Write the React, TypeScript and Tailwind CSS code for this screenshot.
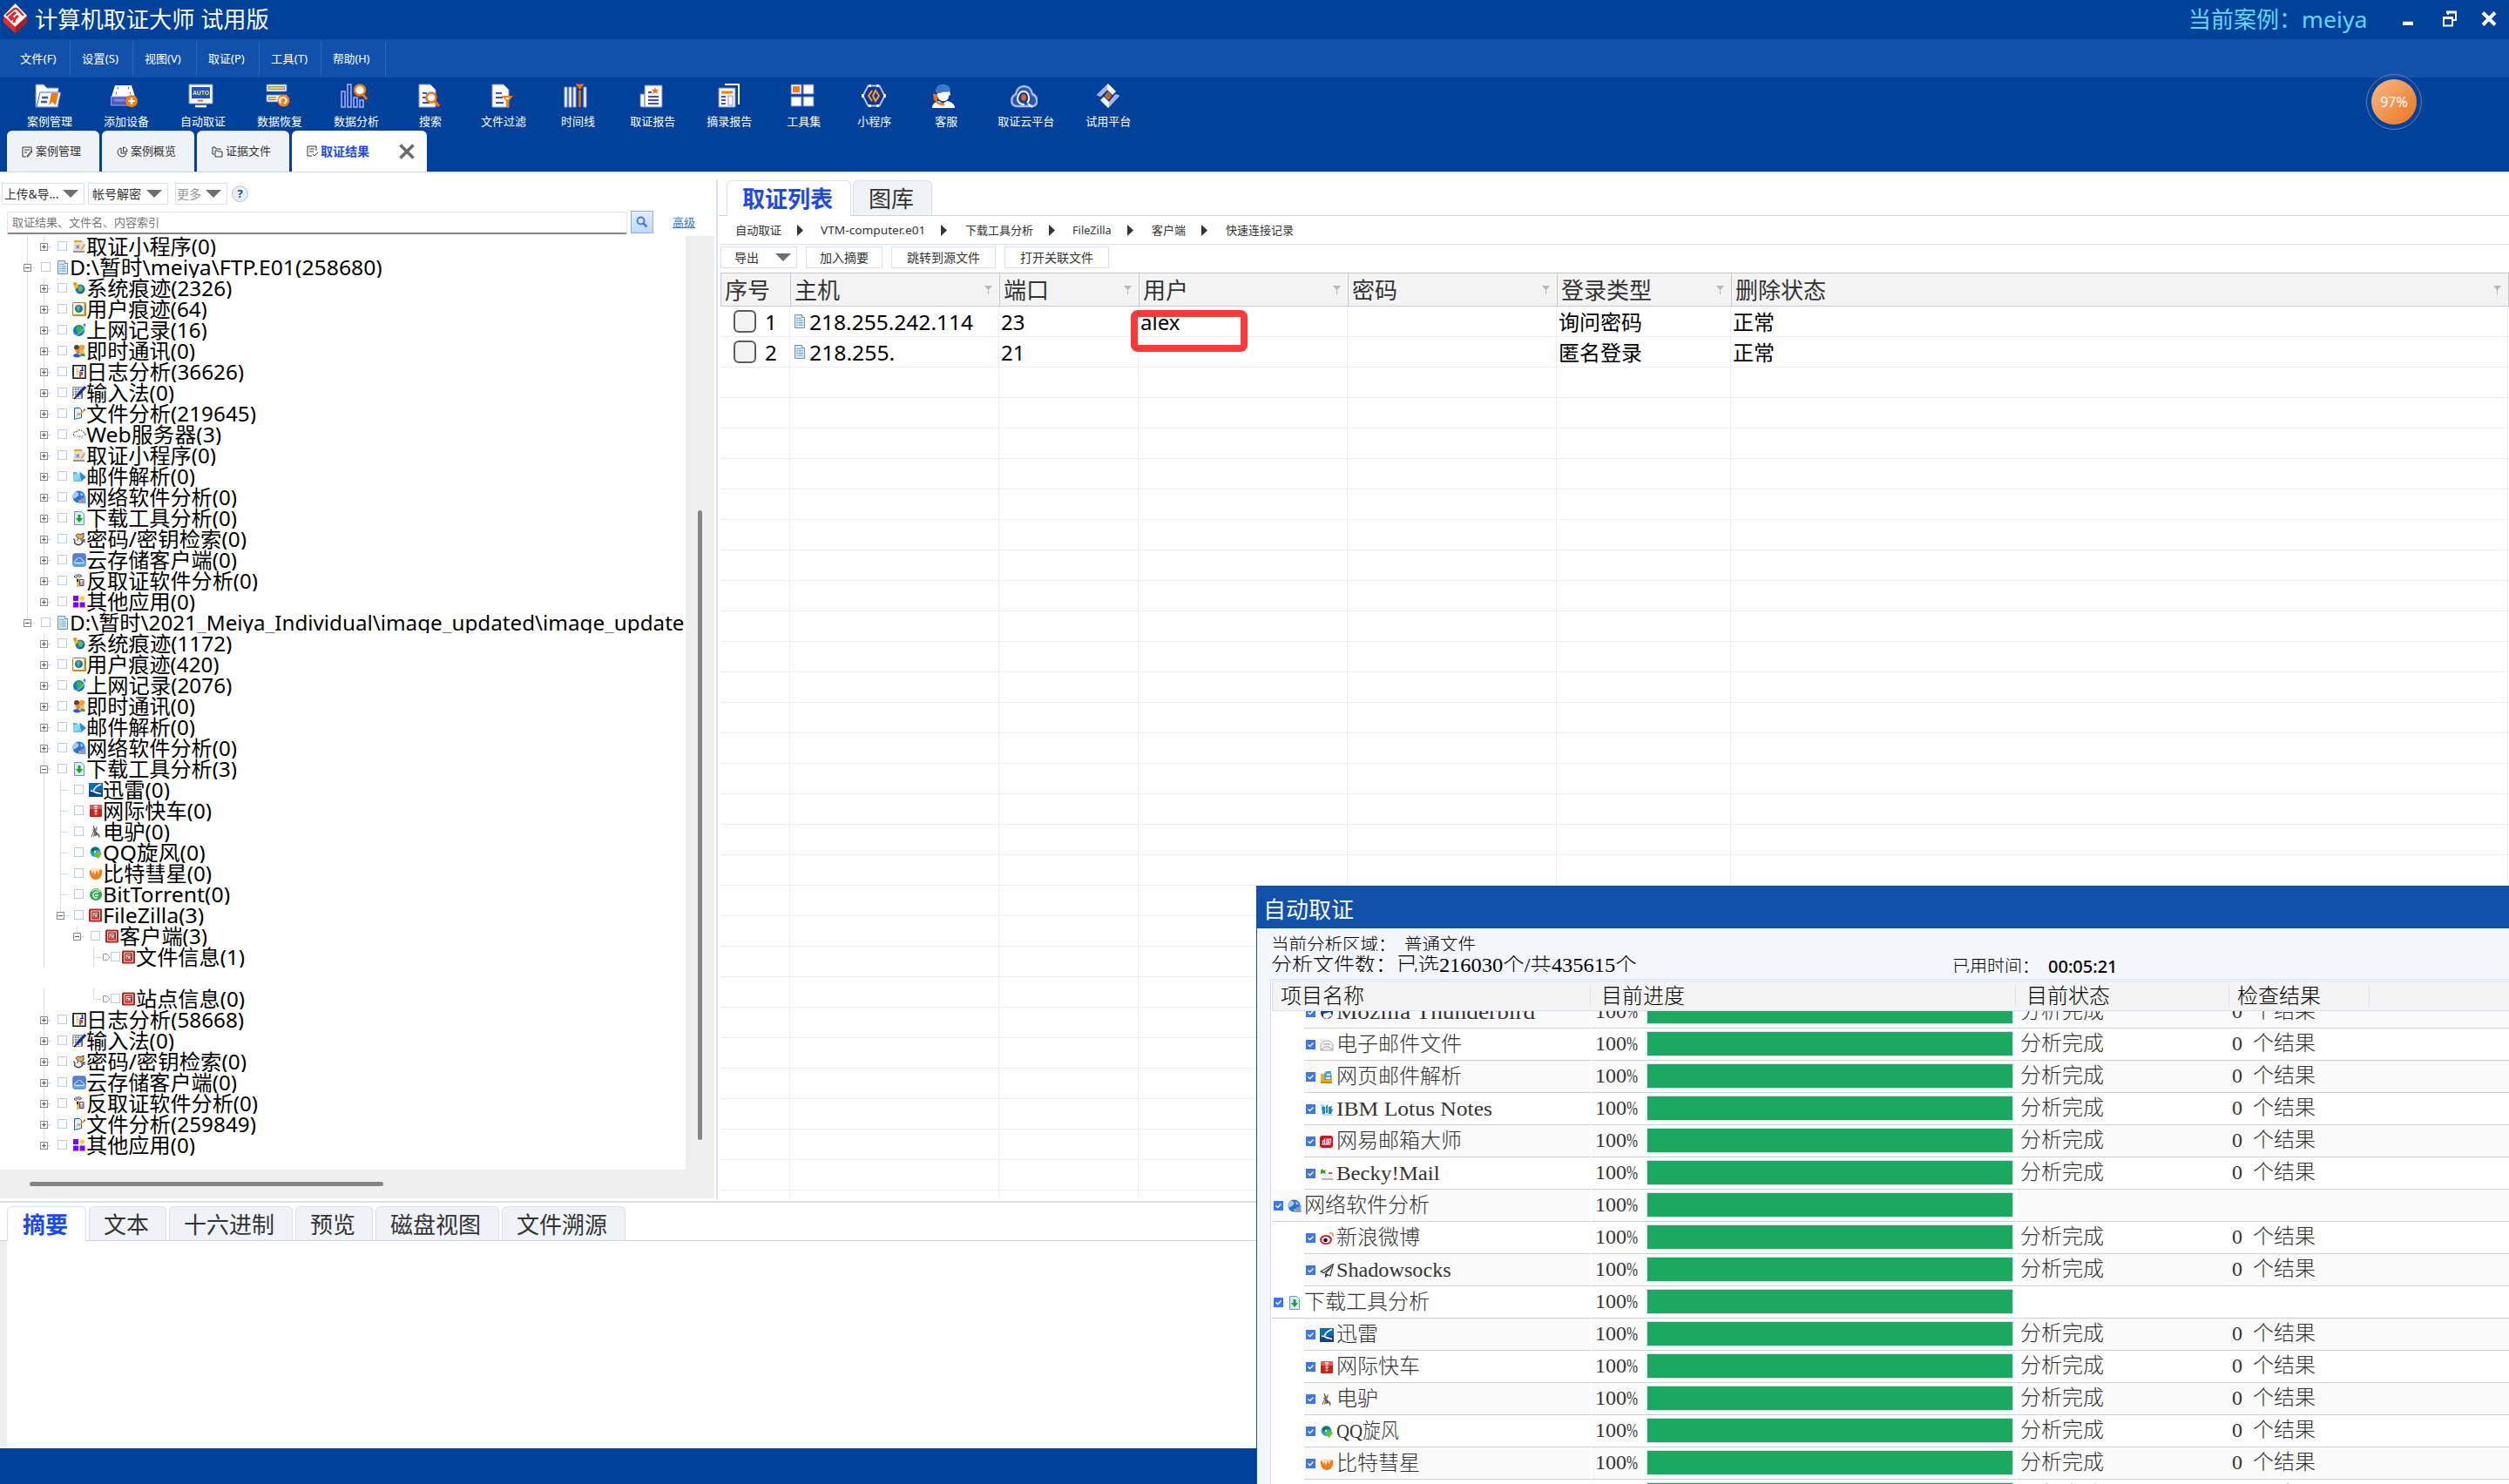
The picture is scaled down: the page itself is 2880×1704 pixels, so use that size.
import { useLayoutEffect, useRef, useState, type ReactNode } from "react";

/* Text squeezed or stretched horizontally to a fixed advance width. */
function Fit({ w, children }: { w: number; children: ReactNode }) {
  const ref = useRef<HTMLSpanElement>(null);
  const [k, setK] = useState(1);
  useLayoutEffect(() => {
    const el = ref.current;
    if (el && el.offsetWidth > 0) setK(w / el.offsetWidth);
  }, [w]);
  return (
    <span className="inline-block whitespace-nowrap" style={{ width: w }}>
      <span ref={ref} className="inline-block origin-left whitespace-pre" style={{ transform: `scaleX(${k})` }}>
        {children}
      </span>
    </span>
  );
}

/* ---------- 16px icons ---------- */
const ICONS: Record<string, ReactNode> = {
  mini: (
    <>
      <path d="M2 2h10l2 3v9H1z" fill="#e4e1dc" />
      <path d="M2 1h9v2H2z" fill="#e8a31c" />
      <path d="M3 6h6v5H3z" fill="#b9c4dd" />
      <path d="M5 9l2-3v4z" fill="#b5432f" />
      <path d="M1 13h13v2H1z" fill="#9a958d" />
      <path d="M14 5l-5 7 3-1 3-5z" fill="#e8964a" />
    </>
  ),
  doc: (
    <>
      <path d="M2.500 0.500h8l3 3v12h-11z" fill="#d3e8f5" stroke="#7893a5" />
      <path d="M10.500.5v3h3" fill="#fff" stroke="#7893a5" />
      <path d="M4.500 4.500h1M4.500 7h1M4.500 9.500h1M4.500 12h1" stroke="#3fa24a" />
      <path d="M6.500 4.500h3M6.500 7h5M6.500 9.500h5M6.500 12h5" stroke="#6d9fc4" />
    </>
  ),
  sys: (
    <>
      <circle cx="9" cy="9" r="5.500" fill="#1d6fd0" />
      <path d="M6 6c2-2 5-1 6 1s-1 5-3 6c-1-2-3-4-3-7z" fill="#5cc23a" />
      <path d="M1 1l4 0 2 5-3 3C2 7 1 4 1 1z" fill="#f2b632" />
      <path d="M2 2l2 1-1 2z" fill="#e0432a" />
      <path d="M8 13c3 0 5-2 5.500-4" stroke="#0b3d86" fill="none" />
    </>
  ),
  user: (
    <>
      <rect x="0.500" y="0.500" width="15" height="15" rx="1" fill="#fdf6cf" stroke="#a8821c" />
      <path d="M14.500 1v14H1" stroke="#b8912c" strokeWidth="2" fill="none" />
      <circle cx="7.500" cy="7.500" r="4.500" fill="#1a6fc4" />
      <path d="M5 6c2-3 4-2 4 0s-1 3-2 5c-1-2-2-3-2-5z" fill="#4ec153" />
    </>
  ),
  web: (
    <>
      <circle cx="7.500" cy="8.500" r="6.500" fill="#1673c5" />
      <path d="M5 4c3-2 7 0 7 3s-3 4-5 6c-2-2-3-6-2-9z" fill="#37b34a" />
      <path d="M1 12C4 16 12 11 15 2" stroke="#7fc4f2" fill="none" strokeWidth="1.200" />
      <circle cx="14" cy="2" r="1.500" fill="#2d8fd8" />
    </>
  ),
  im: (
    <>
      <circle cx="5" cy="4" r="3" fill="#5c4028" />
      <circle cx="11" cy="4" r="3.200" fill="#f0a038" />
      <path d="M3 6h6l1 5H5z" fill="#e8852c" />
      <path d="M8 7h5l1 4H9z" fill="#f5b95c" />
      <path d="M1 14c0-4 7-4 9 0-3 2-6 2-9 0z" fill="#3b4fe0" />
      <path d="M9 11h5l1 3h-5z" fill="#37a83a" />
    </>
  ),
  log: (
    <>
      <rect x="1" y="0.750" width="14" height="14.500" fill="#fffdf0" stroke="#111" strokeWidth="1.500" />
      <path d="M1 3v10" stroke="#111" strokeDasharray="1 1" strokeWidth="2" />
      <path d="M5.500 3v9M5.500 7h4" stroke="#d9c87c" strokeWidth="1.500" />
      <path d="M11.500 2v5M9 6.500h4" stroke="#1a1ae0" strokeWidth="1.600" />
      <path d="M8 9h3v2H9v3" stroke="#c0182c" fill="none" strokeWidth="1.500" />
    </>
  ),
  ime: (
    <>
      <path d="M0.500 1.500h11v13h-11z" fill="#e9e9e9" stroke="#999" />
      <path d="M1 4h10M1 7h10M1 10h10M4 2v12M7 2v12" stroke="#555" strokeDasharray="1 1" />
      <path d="M15 1L5 12" stroke="#0b2aa8" strokeWidth="3" />
      <path d="M5 12l-3 3" stroke="#111" strokeWidth="1.500" />
      <path d="M11 14V7" stroke="#222" />
    </>
  ),
  file: (
    <>
      <path d="M2.500 1.500h6l2 2v9l-8 2z" fill="#e4f3fc" stroke="#1d5c9c" />
      <path d="M4 12l2-6 3 3z" fill="#9ccdf0" />
      <path d="M14 4L8 9 6 8" stroke="#e8a62c" strokeWidth="1.800" fill="none" />
      <circle cx="14" cy="3.500" r="1" fill="#d02c2c" />
    </>
  ),
  srv: (
    <>
      <path d="M2 9c-2-3 1-5 3-4 1-3 6-3 7 0 3 0 4 3 2 5" stroke="#222" strokeDasharray="2 1.200" fill="none" />
      <path d="M5 8h6v3H5z" fill="#eee" />
      <path d="M2 10h12M8 10v4M11 11v3" stroke="#999" strokeDasharray="2 1" />
    </>
  ),
  mail: (
    <>
      <path d="M1 3h4l1 2h5v9H1z" fill="#4fbcdf" />
      <path d="M1 6l5-2 5 2v8H1z" fill="#8bd8f3" />
      <path d="M8 2l8 7-6 5-1-1V6z" fill="#2c8fd0" />
      <path d="M1 14l9-5v5z" fill="#6cc8ec" />
    </>
  ),
  net: (
    <>
      <circle cx="7.500" cy="7.500" r="7" fill="#2a6fd6" />
      <path d="M4 2c3 0 4 2 3 4S3 8 2 10C0 7 1 3 4 2zM9 2l4 3-3 2z" fill="#a8cdf5" />
      <rect x="7" y="11" width="3" height="4" fill="#5ad35e" />
      <rect x="10" y="9" width="3" height="6" fill="#e66ad2" />
      <rect x="13" y="7" width="2.500" height="8" fill="#44b8ea" />
    </>
  ),
  down: (
    <>
      <path d="M2.500.5h8l3 3v12h-11z" fill="#dceafc" stroke="#6f93c2" />
      <path d="M8 4v5" stroke="#1fa32c" strokeWidth="3" />
      <path d="M3.800 8h8.400L8 13z" fill="#1fa32c" />
    </>
  ),
  key: (
    <>
      <path d="M4 4c2-3 4-2 5-1l4-2v5l-2 2H7z" fill="#f2a848" stroke="#444" />
      <path d="M1.500 7.500c2 2 2 3 1 5 3 3 6 3 9 0 0-2 1-3 2-4" fill="#f2f2f2" stroke="#333" strokeWidth="1.200" />
      <circle cx="6" cy="9" r=".8" fill="#222" />
      <path d="M9 9h6M10 11h5" stroke="#444" />
    </>
  ),
  cloud: (
    <>
      <rect x="0.500" y="0.500" width="15" height="15" rx="2.500" fill="#4f7fe0" stroke="#8a98ad" />
      <path d="M1 10h14v4.500H1z" fill="#5cb0ee" />
      <path d="M4 11.500c-3-2 0-4 1-3.500 1-4 6-3 6 0 3 0 3 3 1 3.500z" fill="none" stroke="#fff" strokeWidth=".8" />
    </>
  ),
  anti: (
    <>
      <path d="M2 3c3-3 7-3 9-1L9 4 6 3 4 5z" fill="#aaa" stroke="#444" strokeDasharray="1.500 1" />
      <path d="M6.500 5v10" stroke="#e2b41c" strokeWidth="2.500" />
      <path d="M5 6h2v3H5z" fill="#222" />
      <path d="M8.500 6.500h4.500v7H8.500z" fill="#fff" stroke="#2c3f9c" />
      <path d="M10 13V9M12 13V8" stroke="#d0305c" />
    </>
  ),
  other: (
    <>
      <path d="M1 1h6v6H1zM1 8.500h6v6H1zM8.500 8.500h6v6h-6z" fill="#8400ff" />
      <path d="M11.500.500l3.500 3.500-3.500 3.500L8 4z" fill="#ffd21c" />
    </>
  ),
  xl: (
    <>
      <rect width="16" height="16" fill="#0f6ab8" />
      <path d="M0 9h16v7H0z" fill="#0a4684" />
      <path d="M14 1.500C9 3 6.500 5.500 5 9.500l5 2.500M2 9.500l2-.5M7 10.500l7 2" fill="none" stroke="#fff" strokeWidth="1.600" />
    </>
  ),
  fg: (
    <>
      <rect x="1" y="1" width="14" height="14" rx="1" fill="#c4231f" />
      <path d="M1 1h14v5H1z" fill="#dd605a" />
      <path d="M6 3h4M6.500 5.500h3" stroke="#fff" strokeWidth="1.300" />
      <path d="M5.500 7.500h5L8 10z" fill="#fff" />
      <path d="M5.500 10.500h5L8 13.500z" fill="#f7b02c" />
    </>
  ),
  mule: (
    <>
      <path d="M5 1l2 4 3-4-1 5-1 2 4 3 1 3-3-2-3 1-2 1 1-5z" fill="#7b7268" />
      <path d="M4 6l2 1-2 4-1 3M11 12l1 3M8 8l1 4M5 1l2 5" stroke="#3a3430" fill="none" strokeWidth=".8" />
    </>
  ),
  qq: (
    <>
      <circle cx="7.500" cy="7" r="6" fill="#2a9fd0" />
      <path d="M3 4c3-3 8-2 9 1-3-1-6 0-6 3-2 0-3-2-3-4z" fill="#1b6b4c" />
      <path d="M6 9l5-2 4 2-4 6-4-3z" fill="#62c528" />
      <circle cx="7" cy="7" r="1.300" fill="#e8f8ff" />
    </>
  ),
  bc: (
    <>
      <path d="M1 4c1 2 2-2 3 0s2-3 3-1 2-2 3 0 2-2 5 1c1 6-2 11-7 11S0 10 1 4z" fill="#f07a1a" />
      <path d="M2 3l2 6 1-4 2 5 2-6 2 5 1-4 2-2-2-1H3z" fill="#ffe2bd" />
    </>
  ),
  bt: (
    <>
      <circle cx="8" cy="8" r="7" fill="#2aa84a" />
      <path d="M3 5c3-4 8-3 10 0" stroke="#b8f0bf" strokeWidth="1.500" fill="none" />
      <path d="M11 6c-3-2-6 0-6 3s3 4 5 2M7 9h4" stroke="#fff" strokeWidth="1.500" fill="none" />
    </>
  ),
  fz: (
    <>
      <rect x="0" y="0.500" width="15" height="15" rx="1.500" fill="#b8221a" />
      <rect x="2.700" y="3" width="9.800" height="10" fill="none" stroke="#fff" strokeWidth=".9" />
      <path d="M4.500 5.500h6M5 5.500v5M6 7.500h4l-3.500 3.500M7 8l3.500 3" stroke="#fff" strokeWidth=".9" fill="none" />
    </>
  ),
  tb: (
    <>
      <circle cx="8" cy="8" r="7" fill="#1d3f6e" />
      <path d="M4 9l8-2 2 4-6 4-4-2z" fill="#eef3f8" />
    </>
  ),
  env: (
    <>
      <path d="M1 7l4-4h6l4 4v7H1z" fill="#f2f2f2" stroke="#aaa" />
      <path d="M1 14l5-4h4l5 4M4 7h8" stroke="#999" fill="none" />
    </>
  ),
  webmail: (
    <>
      <path d="M1 4h4l1 1h8v10H1z" fill="#e9b318" />
      <path d="M1 13h13v2H1z" fill="#c28a08" />
      <path d="M7 1h6v10H5V4z" fill="#4ba3e2" />
      <path d="M8 4h4v2H8zM7 8h5v2H7z" fill="#e8f5ff" />
    </>
  ),
  lotus: (
    <>
      <path d="M0 1l3 2 3-1-1 3H2z" fill="#8cc8ea" />
      <path d="M2 5h4v8H3zM7 4l2-2v10H7zM10 5l4-1-1 3 2 1-2 5h-3z" fill="#1987cf" />
      <path d="M3 14h12" stroke="#7bb8dc" />
    </>
  ),
  netease: (
    <>
      <rect x="0" y="1" width="15" height="14" rx="3" fill="#d0131f" />
      <path d="M2.500 11h10M3.500 10.500V7h2v3.500M5.500 4v6M8 11V5h2v6M10 5h2.500v4H10" stroke="#fff" strokeWidth="1.200" fill="none" />
    </>
  ),
  becky: (
    <>
      <path d="M5 7h10v7H2z" fill="#f0f0f0" />
      <path d="M2 14h13" stroke="#777" />
      <path d="M1 4l2-2 1 2 3-1-1 3 1 2-3-1-3 1z" fill="#3f9c2c" />
      <path d="M10 6h4v2h-4z" fill="#c4508c" />
    </>
  ),
  weibo: (
    <>
      <ellipse cx="7" cy="9.500" rx="7" ry="5.500" fill="#d02330" />
      <ellipse cx="7" cy="9.700" rx="4.800" ry="3.600" fill="#fff" />
      <circle cx="6.500" cy="10" r="2.300" fill="#111" />
      <path d="M11 2c3-1 5 1 4 4" stroke="#f0941c" strokeWidth="1.500" fill="none" />
    </>
  ),
  ss: (
    <path d="M15.500 0.500L1 9l3.500 1.500L14 3 6.500 11.500 12 14zM6.500 11.500V15l2.500-2.500" fill="#fff" stroke="#333" strokeWidth="1.100" />
  ),
};

function Ico({ n }: { n: string }) {
  return (
    <svg viewBox="0 0 16 16" className="h-4 w-4 shrink-0">
      {ICONS[n]}
    </svg>
  );
}

/* ---------- header ---------- */
const MENUS: [string, string][] = [
  ["文件(F)", "w-[81px] pl-[23px]"],
  ["设置(S)", "w-[72px] pl-[13px]"],
  ["视图(V)", "w-[73px] pl-[13px]"],
  ["取证(P)", "w-[72px] pl-[13px]"],
  ["工具(T)", "w-[71px] pl-[13px]"],
  ["帮助(H)", "w-[74px] pl-[13px]"],
];

const page = "M3 1h13l6 6v20H3z";
const TOOLS: [string, string, string, ReactNode][] = [
  ["案例管理", "ml-[31px]", "-translate-x-[2px]", (
    <>
      <path d="M1 1h9l4 4h13v22H1z" fill="#fff" stroke="#6d7fd0" />
      <path d="M6 10h24l-4 17H2z" fill="#fff" stroke="#4a66c4" />
      <path d="M8 16h7M7 21h7" stroke="#3a50d0" strokeWidth="2.500" />
      <path d="M19 11h8l-3 14-4-4-4 4z" fill="#f97a0a" />
    </>
  )],
  ["添加设备", "ml-[36px]", "-translate-x-[3px]", (
    <>
      <path d="M5 2h19l4 13H1z" fill="#fff" />
      <path d="M8 5h1M20 5h1M6 11h1M22 11h1" stroke="#4d5fc0" strokeWidth="2.500" />
      <path d="M.5 15h25v10H.5z" fill="#4c5cc4" stroke="#9aa5e0" />
      <path d="M4 19h12" stroke="#7d8be0" strokeWidth="3" />
      <circle cx="24" cy="20" r="7" fill="#fb7c08" />
      <path d="M24 16v8M20 20h8" stroke="#fff" strokeWidth="2.200" />
    </>
  )],
  ["自动取证", "ml-[36px]", "-translate-x-[3px]", (
    <>
      <path d="M2 1h27v22H2z" fill="#fff" stroke="#7a8ad8" />
      <path d="M5 4h21v13H5z" fill="#174fd8" />
      <text x="6" y="13" fontSize="8" fontFamily="Liberation Sans" fontWeight="bold" fill="#f0ee3c" textLength="19" lengthAdjust="spacingAndGlyphs">AUTO</text>
      <path d="M12 19.500h6" stroke="#f5640a" strokeWidth="2" />
      <path d="M9 26h13" stroke="#fff" strokeWidth="2.500" />
    </>
  )],
  ["数据恢复", "ml-[36px]", "-translate-x-[2px]", (
    <>
      <path d="M2 1h23v8H2zM2 13h23v8H2z" fill="#fff" stroke="#6d7fd0" />
      <path d="M4 5h19M4 17h9" stroke="#7d86b4" strokeWidth="4" />
      <path d="M5 5h17M5 17h8" stroke="#f0e01c" strokeWidth="2" />
      <circle cx="21.500" cy="19.500" r="7" fill="#fb7c08" />
      <path d="M18 23c-2-5 1-8 4-7s4 5 0 7M16 18l2 0" stroke="#fff" strokeWidth="2" fill="none" />
    </>
  )],
  ["数据分析", "ml-[36px]", "-translate-x-[3px]", (
    <>
      <path d="M1 9h4v18H1zM8 1h4v26H8zM15 16h4v11h-4zM22 19h4v8h-4z" fill="#0c3ca4" stroke="#a9b3f2" strokeWidth="1.500" />
      <path d="M25 12l5 6" stroke="#f5740a" strokeWidth="3" />
      <circle cx="22" cy="7.500" r="6" fill="#fff" stroke="#f5740a" strokeWidth="2.500" />
    </>
  )],
  ["搜索", "ml-[46px]", "-translate-x-[1px]", (
    <>
      <path d={page} fill="#fff" stroke="#8898e0" />
      <path d="M7 11h5M7 16h5M7 22h8" stroke="#3a50d0" strokeWidth="2" />
      <path d="M21 20l5 6" stroke="#f5740a" strokeWidth="3" />
      <circle cx="17" cy="16" r="5.500" fill="#fff" stroke="#f5740a" strokeWidth="2.500" />
    </>
  )],
  ["文件过滤", "ml-[45px]", "-translate-x-[1px]", (
    <>
      <path d={page} fill="#fff" stroke="#8898e0" />
      <path d="M7 11h7M7 16h8M7 22h9" stroke="#3a50d0" strokeWidth="2" />
      <path d="M14 14h13l-5 6v8l-3-2v-6z" fill="#fb7c08" />
      <path d="M18 16h5l-2.500 3z" fill="#fff" />
    </>
  )],
  ["时间线", "ml-[40px]", "-translate-x-[3px]", (
    <>
      <path d="M3 4h3v23H3zM8 4h3v23H8zM13 4h3v23h-3zM25 4h3v23h-3z" fill="#fff" stroke="#8d9ae2" />
      <path d="M20.500 8v19" stroke="#fb6c08" strokeWidth="2.500" />
      <path d="M15.500 0.500h10l-5 6.500z" fill="#fb6c08" />
    </>
  )],
  ["取证报告", "ml-[40px]", "-translate-x-[2px]", (
    <>
      <path d="M3 12h5v15H5c-2 0-2-1-2-3z" fill="#fff" stroke="#6d7fd0" />
      <path d="M8 2h20v25H8z" fill="#fff" stroke="#6d7fd0" />
      <path d="M12 10h4M12 15h12M12 19h12M12 23h12" stroke="#3a50d0" strokeWidth="2" />
      <path d="M20 4l1 3h3l-2 2 1 3-3-2-3 2 1-3-2-2h3z" fill="#fb6c08" />
    </>
  )],
  ["摘录报告", "ml-[36px]", "", (
    <>
      <path d="M10 1h16v23" fill="none" stroke="#fff" strokeWidth="2" />
      <path d="M3 5h19v22H3z" fill="#fff" stroke="#6d7fd0" />
      <path d="M6 10h13" stroke="#fb7c08" strokeWidth="3" />
      <path d="M6 15h5M6 19h5M6 23h5" stroke="#3a50d0" strokeWidth="2" />
      <path d="M14 14h5v11h-5z" fill="#fff" stroke="#7a8ad8" />
    </>
  )],
  ["工具集", "ml-[40px]", "-translate-x-[1px]", (
    <>
      <path d="M2 1h12v11H2zM16 1h12v11H16zM2 15h12v11H2zM16 15h12v11H16z" fill="#fff" stroke="#5a72cc" />
      <path d="M4 3h8v7H4z" fill="#fb7c08" />
    </>
  )],
  ["小程序", "ml-[42px]", "", (
    <>
      <path d="M8.500 2.500h13l6 11.500-6 11.500h-13L2.500 14z" fill="#1b2f9c" stroke="#9ec8f0" strokeWidth="2" />
      <path d="M9 1h3v3H9zM18 1h3v3h-3zM9 24h3v3H9zM18 24h3v3h-3zM1 12h3v4H1zM26 12h3v4h-3z" fill="#fff" />
      <path d="M13 8l-4 6 4 6M17 8l-3 6 3 6 4-6z" stroke="#eea71c" strokeWidth="2" fill="none" />
    </>
  )],
  ["客服", "ml-[50px]", "-translate-x-[3px]", (
    <>
      <path d="M8 8h14l1 5-2 1c0 4-2 6-7 6-4 0-6-4-6-7z" fill="#fff" />
      <path d="M6 9c-1-11 18-11 17 0-5 1-9 0-12 2H7z" fill="#3b78cc" />
      <path d="M3 12h5v7H4z" fill="#fb6c08" />
      <path d="M2 28c0-5 4-7 8-8l4 3 5-3c6 1 9 4 9 8z" fill="#fff" />
      <path d="M6 19c2 4 6 5 10 5" stroke="#fb6c08" strokeWidth="2.500" fill="none" />
    </>
  )],
  ["取证云平台", "ml-[46px]", "-translate-x-[2px]", (
    <>
      <path d="M7 26C-1 25 0 15 6 12c2-12 17-12 19 0 7 3 7 13 0 14H7z" fill="#2a55b4" stroke="#a9bbe8" strokeWidth="2.500" />
      <path d="M20 23l5 4M19 22c4-4 2-13-4-13S6 18 10 22c2 2 4 2 6 2" fill="#0c3ca4" stroke="#fff" strokeWidth="2" />
      <ellipse cx="15" cy="16" rx="2.800" ry="3.800" fill="#f0620a" />
    </>
  )],
  ["试用平台", "ml-[36px]", "", (
    <>
      <path d="M15 0l9 9-4 4-6-6L6 15l-4-2z" fill="#fff" />
      <path d="M14 1L2 13l4 2 8-8z" fill="#a9b3ea" />
      <path d="M15 28l-9-9 4-4 6 6 8-9 4 2z" fill="#fff" />
      <path d="M16 27l12-13-4-2-8 9z" fill="#a9b3ea" />
      <path d="M15 9l4 5-4 5-4-5z" fill="#f07a1c" />
      <path d="M15 9v10M11 14h8" stroke="#b0440a" />
    </>
  )],
];

function Header() {
  return (
    <header className="h-[197px] shrink-0 bg-[#00419c] text-white">
      <div className="flex h-[45px] items-center">
        <svg viewBox="0 0 27 34" className="ml-[4px] mt-[-3px] h-[34px] w-[27px]">
          <path d="M13.500 0L27 15v7L13.500 34 0 22v-7z" fill="#e02a2c" />
          <path d="M13.500 0L27 14 13.500 27 0 14z" fill="#fff" />
          <path d="M3 14L12 6.500c2-1.500 4 0 5 1l6 6.500" stroke="#e02a2c" strokeWidth="2.500" fill="none" />
          <path d="M6 17l8-7M12 22c0-4 2-6 5-8M8 19l4-3" stroke="#e02a2c" strokeWidth="3" fill="none" />
          <path d="M13.500 27L27 15v7L13.500 34z" fill="#b01c22" />
        </svg>
        <span className="ml-[9px] text-[26px] leading-[45px]"><Fit w={269}>计算机取证大师 试用版</Fit></span>
        <div className="ml-auto flex items-center">
          <span className="text-[26px] leading-[45px] text-[#5fd8fb]">当前案例：</span>
          <span className="text-[26px] leading-[45px] text-[#5fd8fb]"><Fit w={76}>meiya</Fit></span>
          <svg viewBox="0 0 110 20" className="ml-[38px] mr-[14px] mt-[-4px] h-[20px] w-[110px]">
            <path d="M2 13.800h12v4.200H2z" fill="#fff" />
            <path d="M54 6V3h9v9h-3M49 9h10v9.500H49z" fill="none" stroke="#fff" strokeWidth="2" />
            <path d="M48 8h12v3H48zM52 1.500h12v3H52z" fill="#fff" />
            <path d="M94 3.500l14 14M108 3.500l-14 14" stroke="#fff" strokeWidth="4" />
          </svg>
        </div>
      </div>
      <nav className="flex h-[44px] bg-[#1151ac] py-[2px] text-[13px] leading-[40px]">
        {MENUS.map(([t, c]) => (
          <span key={t} className={`${c} border-r border-[#2c66b8]`}>
            <Fit w={42}>{t}</Fit>
          </span>
        ))}
      </nav>
      <div className="flex h-[61px] pt-[7px]">
        {TOOLS.map(([t, ml, shift, svg]) => (
          <div key={t} className={`${ml} flex flex-col items-center whitespace-nowrap text-[13px] leading-[20px]`}>
            <svg viewBox="0 0 31 29" className={`${shift} -mx-[4px] h-[29px] w-[31px]`}>{svg}</svg>
            <span className="mt-[4px]">{t}</span>
          </div>
        ))}
      </div>
      <div className="flex h-[47px] items-end gap-[3px] pl-[8px] text-[13px] text-[#333]">
        <span className="flex h-[47px] w-[106px] items-center gap-[3px] rounded-t-[6px] border-t border-[#d6e0f2] bg-[#eff3f8] pl-[17px]">
          <svg viewBox="0 0 13 13" className="h-[13px] w-[13px]"><path d="M11 5V1H1v11h4M3 4h6M3 7h3M12 6l-5 6-1 0 1-2 4-5z" stroke="#333" fill="none" /></svg>
          案例管理
        </span>
        <span className="flex h-[47px] w-[106px] items-center gap-[3px] rounded-t-[6px] border-t border-[#d6e0f2] bg-[#eff3f8] pl-[17px]">
          <svg viewBox="0 0 13 13" className="h-[13px] w-[13px]"><path d="M5 2a5 5 0 106 6H5zM7.500 1a5 5 0 014.500 5l-4.500 0z" stroke="#333" fill="none" /></svg>
          案例概览
        </span>
        <span className="flex h-[47px] w-[106px] items-center gap-[3px] rounded-t-[6px] border-t border-[#d6e0f2] bg-[#eff3f8] pl-[17px]">
          <svg viewBox="0 0 13 13" className="h-[13px] w-[13px]"><path d="M10 4V3H5L4 1H1v8h2M4 5h3l1 1h4v6H4z" stroke="#333" fill="none" /></svg>
          证据文件
        </span>
        <span className="flex h-[47px] w-[155px] items-center gap-[3px] rounded-t-[6px] bg-white pl-[17px] text-[14px] font-semibold text-[#1b49ee]">
          <svg viewBox="0 0 13 13" className="h-[13px] w-[13px]"><path d="M11 6V1H1v11h5M3 4h6M3 7h5M7 10l2 2 4-4" stroke="#333" fill="none" /></svg>
          取证结果
          <svg viewBox="0 0 18 18" className="ml-[31px] h-[18px] w-[18px]"><path d="M1.500 1.500l15 15M16.500 1.500l-15 15" stroke="#6b6b6b" strokeWidth="3.500" /></svg>
        </span>
      </div>
    </header>
  );
}

/* ---------- evidence tree ---------- */
type Row = { g: string; t?: string; b?: "+" | "-" | "" | ">"; i?: string; half?: boolean; w?: number };
const r = (g: string, b: Row["b"], i: string, t: string, half = false, w?: number): Row => ({ g, b, i, t, half, w });
const ROWS: Row[] = [
  r("|", "+", "mini", "取证小程序(0)", true),
  r("", "-", "doc", "D:\\暂时\\meiya\\FTP.E01(258680)", false, 359),
  r("|", "+", "sys", "系统痕迹(2326)"),
  r("|", "+", "user", "用户痕迹(64)"),
  r("|", "+", "web", "上网记录(16)"),
  r("|", "+", "im", "即时通讯(0)"),
  r("|", "+", "log", "日志分析(36626)"),
  r("|", "+", "ime", "输入法(0)"),
  r("|", "+", "file", "文件分析(219645)"),
  r("|", "+", "srv", "Web服务器(3)", false, 155),
  r("|", "+", "mini", "取证小程序(0)"),
  r("|", "+", "mail", "邮件解析(0)"),
  r("|", "+", "net", "网络软件分析(0)"),
  r("|", "+", "down", "下载工具分析(0)"),
  r("|", "+", "key", "密码/密钥检索(0)", false, 184),
  r("|", "+", "cloud", "云存储客户端(0)"),
  r("|", "+", "anti", "反取证软件分析(0)"),
  r("|", "+", "other", "其他应用(0)", true),
  r("", "-", "doc", "D:\\暂时\\2021_Meiya_Individual\\image_updated\\image_update", true, 706),
  r(" ", "+", "sys", "系统痕迹(1172)"),
  r(" ", "+", "user", "用户痕迹(420)"),
  r(" ", "+", "web", "上网记录(2076)"),
  r(" ", "+", "im", "即时通讯(0)"),
  r(" ", "+", "mail", "邮件解析(0)"),
  r(" ", "+", "net", "网络软件分析(0)"),
  r(" ", "-", "down", "下载工具分析(3)"),
  r(" |", "", "xl", "迅雷(0)"),
  r(" |", "", "fg", "网际快车(0)"),
  r(" |", "", "mule", "电驴(0)"),
  r(" |", "", "qq", "QQ旋风(0)", false, 118),
  r(" |", "", "bc", "比特彗星(0)"),
  r(" |", "", "bt", "BitTorrent(0)", false, 146),
  r(" |", "-", "fz", "FileZilla(3)", true, 116),
  r(" | ", "-", "fz", "客户端(3)", true),
  r(" |  ", ">", "fz", "文件信息(1)"),
  { g: "" },
  r(" |  ", ">", "fz", "站点信息(0)", true),
  r(" ", "+", "log", "日志分析(58668)"),
  r(" ", "+", "ime", "输入法(0)"),
  r(" ", "+", "key", "密码/密钥检索(0)", false, 184),
  r(" ", "+", "cloud", "云存储客户端(0)"),
  r(" ", "+", "anti", "反取证软件分析(0)"),
  r(" ", "+", "file", "文件分析(259849)"),
  r(" ", "+", "other", "其他应用(0)", true),
];

/* Advance width of a label made of full-width characters, digits and brackets. */
function labelWidth(t: string) {
  let w = 0;
  for (const c of t) {
    if (c > "\u2e80") w += 24;
    else if (c >= "0" && c <= "9") w += 14.06;
    else if (c === "(" || c === ")") w += 7.4;
    else return undefined;
  }
  return w;
}

function TreeRow({ row }: { row: Row }) {
  if (!row.t) return <div className="h-[24px]" />;
  const w = row.w ?? labelWidth(row.t);
  /* The outer guides follow the toggle column of each ancestor level. */
  const cells = row.g.split("");
  return (
    <div className="flex h-[24px] overflow-hidden pl-[22px]">
      {cells.map((c, i) => (
        <span key={i} className="flex w-[19px] shrink-0 justify-center">
          {c === "|" && <span className="w-px bg-[#dcdcdc]" />}
        </span>
      ))}
      <svg viewBox="0 0 19 24" className="h-[24px] w-[19px] shrink-0">
        <path d={row.half ? "M9.500 0v12.500" : "M9.500 0v24"} stroke="#dcdcdc" />
        <path d="M9.500 12.500h8.500" stroke="#dcdcdc" />
        {(row.b === "+" || row.b === "-") && (
          <>
            <rect x="5.500" y="8.500" width="8" height="8" fill="#fff" stroke="#8a8a8a" />
            <path d={row.b === "+" ? "M7 12.500h5M9.500 10v5" : "M7 12.500h5"} stroke="#33529c" />
          </>
        )}
      </svg>
      {row.b === ">" ? (
        <>
          <svg viewBox="0 0 10 24" className="h-[24px] w-[10px] shrink-0"><path d="M1.500 8.500h4.500l3 3.500-3 3.500H1.500z" fill="#fff" stroke="#9a9a9a" /></svg>
          <span className="mr-[2px] mt-[6px] h-[11px] w-[11px] shrink-0 border border-[#b5cdf8]" />
        </>
      ) : (
        <span className="mx-[6px] mt-[6px] h-[11px] w-[11px] shrink-0 border border-[#b5cdf8] bg-white" />
      )}
      <span className="mt-[4px] h-4"><Ico n={row.i!} /></span>
      <span className="whitespace-nowrap text-[24px] leading-[24px] text-black">
        {w ? <Fit w={w}>{row.t}</Fit> : row.t}
      </span>
    </div>
  );
}

function Caret() {
  return <svg viewBox="0 0 18 9" className="h-[9px] w-[18px] shrink-0"><path d="M0 0h18L9 9z" fill="#6e6e6e" /></svg>;
}

function LeftPanel() {
  return (
    <section className="flex w-[820px] shrink-0 flex-col">
      <div className="mt-[12px] flex h-[25px] text-[14px] leading-[23px] text-[#333]">
        <div className="ml-[2px] flex w-[95px] items-center justify-between border border-[#d6e0f2] pl-[2px] pr-[6px]"><Fit w={63}>上传&amp;导...</Fit><Caret /></div>
        <div className="ml-[4px] flex w-[92px] items-center justify-between border border-[#d6e0f2] pl-[4px] pr-[6px]"><span>帐号解密</span><Caret /></div>
        <div className="ml-[8px] flex w-[60px] items-center justify-between border border-[#d6e0f2] pl-[1px] pr-[6px] text-[#999]"><span>更多</span><Caret /></div>
        <div className="ml-[5px] mt-[3px] h-[19px] w-[19px] rounded-full border border-[#b4c8de] bg-[#e6eef6] text-center text-[13px] font-bold leading-[17px] text-[#1c4c8c]">?</div>
      </div>
      <div className="mt-[7px] flex h-[29px] items-start">
        <div className="ml-[8px] mt-[1px] h-[26px] w-[712px] rounded-[2px] border border-b-2 border-[#e6e6e6] border-b-[#868686] pl-[5px] text-[13px] leading-[23px] text-[#767676]">取证结果、文件名、内容索引</div>
        <div className="ml-[4px] flex h-[26px] w-[26px] items-center justify-center border border-[#93b1dc] bg-gradient-to-b from-[#e2edfb] to-[#bfd9fb]">
          <svg viewBox="0 0 14 14" className="h-[14px] w-[14px]"><circle cx="5.500" cy="5.500" r="4" fill="none" stroke="#4d7cc0" strokeWidth="2" /><path d="M8.500 8.500l4 4" stroke="#4d7cc0" strokeWidth="2.500" /></svg>
        </div>
        <a className="ml-[22px] mt-[2px] text-[13px] leading-[22px] text-[#3d74d6] underline">高级</a>
      </div>
      <div className="flex h-[1072px]">
        <div className="w-[787px] overflow-hidden">
          {ROWS.map((row, i) => <TreeRow key={i} row={row} />)}
        </div>
        <div className="w-[33px] bg-[#efefef] pl-[14px] pt-[315px]">
          <div className="h-[723px] w-[5px] rounded-full bg-[#858585]" />
        </div>
      </div>
      <div className="h-[33px] bg-[#efefef] pl-[34px] pt-[14px]">
        <div className="h-[5px] w-[406px] rounded-full bg-[#858585]" />
      </div>
    </section>
  );
}

/* ---------- results table ---------- */
const CRUMBS: [string, string, number][] = [
  ["自动取证", "", 53],
  ["VTM-computer.e01", "ml-[20px]", 120],
  ["下载工具分析", "ml-[21px]", 78],
  ["FileZilla", "ml-[20px]", 45],
  ["客户端", "ml-[21px]", 39],
  ["快速连接记录", "ml-[21px]", 78],
];
const COLS: [string, string, boolean][] = [
  ["序号", "w-[80px]", false],
  ["主机", "w-[240px]", true],
  ["端口", "w-[160px]", true],
  ["用户", "w-[240px]", true],
  ["密码", "w-[240px]", true],
  ["登录类型", "w-[200px]", true],
  ["删除状态", "w-[892px]", true],
];
const DATA = [
  ["1", "218.255.242.114", "23", "alex", "", "询问密码", "正常"],
  ["2", "218.255.", "21", "", "", "匿名登录", "正常"],
];
const HOST_WIDTH = [188, 98];

function RightPanel() {
  return (
    <section className="flex flex-1 flex-col overflow-hidden">
      <div className="flex h-[50px] items-end border-b border-[#cfcfdd] pl-[9px] text-[26px] leading-[40px]">
        <span className="-mb-px h-[41px] w-[143px] rounded-t-[6px] border border-b-0 border-[#d6e0f2] bg-white pl-[17px] font-bold text-[#1b49ee]">取证列表</span>
        <span className="ml-[2px] h-[40px] w-[91px] rounded-t-[6px] border border-b-0 border-[#d6e0f2] bg-[#eff3f8] pl-[17px] text-[#333]">图库</span>
      </div>
      <div className="ml-px flex h-[33px] items-center border-b border-[#d6e0f2] pl-[18px] text-[13px] leading-[32px] text-[#333]">
        {CRUMBS.map(([t, ml, w], i) => (
          <span key={t} className={`${ml} flex items-center`}>
            <Fit w={w}>{t}</Fit>
            {i < 5 && <svg viewBox="0 0 7 13" className="ml-[18px] h-[13px] w-[7px]"><path d="M0 0l7 6.500L0 13z" fill="#333" /></svg>}
          </span>
        ))}
      </div>
      <div className="ml-[2px] mt-[2px] flex h-[25px] text-[14px] leading-[23px] text-[#333]">
        <span className="flex w-[88px] items-center justify-between border border-[#d6e0f2] pl-[15px] pr-[6px]">导出<Caret /></span>
        <span className="ml-[10px] w-[88px] border border-[#d6e0f2] text-center">加入摘要</span>
        <span className="ml-[10px] w-[120px] border border-[#d6e0f2] text-center">跳转到源文件</span>
        <span className="ml-[10px] w-[120px] border border-[#d6e0f2] text-center">打开关联文件</span>
      </div>
      <div className="relative ml-[2px] mt-[5px] flex-1 overflow-hidden">
        <div className="flex h-[39px] border-y border-l border-[#c9c9d6] bg-[#f3f3f3] text-[26px] leading-[39px] text-[#333]">
          {COLS.map(([t, c, f]) => (
            <span key={t} className={`${c} flex shrink-0 justify-between border-r border-[#c9c9d6] pl-[4px] pr-[8px]`}>
              {t}
              {f && <svg viewBox="0 0 9 10" className="mt-[14px] h-[10px] w-[9px]"><path d="M0 0h9L5 5v5H4V5z" fill="#b9b9b9" /></svg>}
            </span>
          ))}
        </div>
        {Array.from({ length: 30 }, (_, i) => (
          <div key={i} className="flex h-[35px] border-b border-[#ececec] text-[24px] leading-[35px] text-black">
            {COLS.map(([t, c], j) => (
              <span key={t} className={`${c} flex shrink-0 items-center border-r border-[#ececec] ${j === 0 ? "pl-[15px]" : "pl-[2px]"}`}>
                {DATA[i] && j === 0 && <span className="mr-[10px] h-[26px] w-[26px] rounded-[6px] border-2 border-[#5c5c5c] bg-[#f3f3f3]" />}
                {DATA[i] && j === 1 ? (
                  <>
                    <span className="ml-[1px] mr-[3px]"><Ico n="doc" /></span>
                    <Fit w={HOST_WIDTH[i]}>{DATA[i][j]}</Fit>
                  </>
                ) : (
                  DATA[i]?.[j]
                )}
              </span>
            ))}
          </div>
        ))}
        <div className="absolute left-[471px] top-[43px] h-[48px] w-[134px] rounded-[8px] border-8 border-[#fc3838]" />
      </div>
    </section>
  );
}

/* ---------- lower tabs ---------- */
const LOWER: [string, string][] = [
  ["文本", "w-[89px]"],
  ["十六进制", "w-[142px]"],
  ["预览", "w-[89px]"],
  ["磁盘视图", "w-[142px]"],
  ["文件溯源", "w-[142px]"],
];

function LowerPanel() {
  return (
    <section className="flex h-[286px] shrink-0 flex-col">
      <div className="mt-[2px] h-[2px] shrink-0 bg-[#d6e0f2]" />
      <div className="flex h-[44px] shrink-0 items-end gap-[3px] border-b border-[#cfcfdd] pl-[8px] text-[26px] leading-[40px] text-[#333]">
        <span className="-mb-px h-[40px] w-[91px] rounded-t-[6px] border border-b-0 border-[#d6e0f2] bg-white pl-[17px] font-bold text-[#1b49ee]">摘要</span>
        {LOWER.map(([t, c]) => (
          <span key={t} className={`${c} h-[39px] rounded-t-[6px] border border-b-0 border-[#d6e0f2] bg-[#eff3f8] pl-[16px]`}>{t}</span>
        ))}
      </div>
      <div className="flex-1 border-l-8 border-[#efefef] bg-white" />
    </section>
  );
}

/* ---------- automatic forensics window ---------- */
type Job = [string, string, boolean, number?];
const JOBS: Job[] = [
  ["tb", "Mozilla Thunderbird", false, 228],
  ["env", "电子邮件文件", false],
  ["webmail", "网页邮件解析", false],
  ["lotus", "IBM Lotus Notes", false, 179],
  ["netease", "网易邮箱大师", false],
  ["becky", "Becky!Mail", false, 119],
  ["net", "网络软件分析", true],
  ["weibo", "新浪微博", false],
  ["ss", "Shadowsocks", false, 132],
  ["down", "下载工具分析", true],
  ["xl", "迅雷", false],
  ["fg", "网际快车", false],
  ["mule", "电驴", false],
  ["qq", "QQ旋风", false, 72],
  ["bc", "比特彗星", false],
  ["bt", "BitTorrent", false, 119],
];

function JobRow({ job, odd }: { job: Job; odd: boolean }) {
  const [icon, name, top, w] = job;
  const bg = odd ? "bg-white" : "bg-[#fafafa]";
  return (
    <div className="flex h-[37px] shrink-0 text-[24px] leading-[35px] text-[#333]">
      <div className={`${top ? "w-[366px]" : "ml-[37px] w-[329px]"} ${bg} flex shrink-0 items-center border-b border-[#cdd0da] pl-[2px]`}>
        <svg viewBox="0 0 11 11" className="h-[11px] w-[11px] shrink-0"><path d="M0 0h11v11H0z" fill="#3b76ee" /><path d="M2.500 5.500l2.200 2L8.500 3.500" stroke="#fff" strokeWidth="1.300" fill="none" /></svg>
        <span className="ml-[5px] mr-[3px] mt-[2px]"><Ico n={icon} /></span>
        {w ? <Fit w={w}>{name}</Fit> : name}
      </div>
      <div className={`${bg} ml-px flex w-[487px] shrink-0 border-b border-[#cdd0da] pl-[4px]`}>
        <span>100</span><Fit w={13}>%</Fit>
        <span className="ml-[10px] mt-[3px] h-[29px] w-[421px] border border-[#d6e0f2] bg-[#1ba95f]" />
      </div>
      <div className={`${bg} ml-px flex flex-1 border-b border-[#cdd0da] pl-[4px]`}>
        {!top && (
          <>
            <span className="w-[243px]">分析完成</span>
            <span>0</span>
            <span className="ml-[12px]">个结果</span>
          </>
        )}
      </div>
    </div>
  );
}

function AutoWindow() {
  return (
    <div className="absolute left-[1442px] top-[1017px] flex h-[687px] w-[1438px] flex-col overflow-hidden border-l border-[#1151ac] bg-[#f3f6fb]">
      <div className="h-[49px] shrink-0 bg-[#1151ac] pl-[7px] text-[26px] leading-[54px] text-white">自动取证</div>
      <div className="flex h-[58px] shrink-0 font-['Liberation_Serif','Noto_Sans_CJK_SC',serif] font-light text-black">
        <div className="w-[798px] pl-[16px] pt-[8px]">
          <div className="h-[18px] overflow-hidden whitespace-nowrap text-[20.5px] leading-[22px]">
            <span className="inline-block w-[153px]">当前分析区域：</span>普通文件
          </div>
          <div className="mt-[5px] h-[19px] overflow-hidden whitespace-nowrap text-[24px] leading-[23px]">
            <span className="inline-block w-[144px]">分析文件数：</span><Fit w={276}>已选216030个/共435615个</Fit>
          </div>
        </div>
        <div className="mt-[33px] h-[18px] overflow-hidden whitespace-nowrap text-[20px] leading-[22px]">
          <span className="inline-block w-[110px]">已用时间：</span>
          <span className="font-['Noto_Sans',sans-serif] font-medium"><Fit w={80}>00:05:21</Fit></span>
        </div>
      </div>
      <div className="ml-[15px] flex flex-1 flex-col overflow-hidden border-l border-t border-[#d6e0f2] bg-white pl-px pt-px font-['Liberation_Serif','Noto_Sans_CJK_SC',serif] font-light">
        <div className="flex h-[35px] shrink-0 border border-r-0 border-[#d6e0f2] bg-[#f3f3f3] py-[4px] text-[24px] leading-[26px] text-black">
          <span className="w-[365px] border-r border-[#d6e0f2] pl-[9px]">项目名称</span>
          <span className="w-[488px] border-r border-[#d6e0f2] pl-[12px]">目前进度</span>
          <span className="w-[245px] border-r border-[#d6e0f2] pl-[12px]">目前状态</span>
          <span className="w-[161px] border-r border-[#d6e0f2] pl-[9px]">检查结果</span>
        </div>
        <div className="flex flex-1 flex-col overflow-hidden">
          <div className="-mt-[17px] flex flex-col">
            {JOBS.map((j, i) => <JobRow key={j[1]} job={j} odd={i % 2 === 1} />)}
          </div>
        </div>
      </div>
    </div>
  );
}

export default function App() {
  return (
    <div className="relative flex h-[1704px] w-[2880px] flex-col overflow-hidden bg-white font-['Noto_Sans','Noto_Sans_CJK_SC',sans-serif]">
      <Header />
      <main className="flex h-[1180px] shrink-0 border-t border-[#d3d6e6]">
        <LeftPanel />
        <div className="ml-[2px] mr-px mt-[8px] w-[2px] bg-[#d6e0f2]" />
        <RightPanel />
      </main>
      <LowerPanel />
      <footer className="flex-1 bg-[#00419c]" />
      <div className="absolute left-[2716px] top-[85px] flex h-[64px] w-[64px] items-center justify-center rounded-full border border-[#6f7d9c]">
        <div className="h-[52px] w-[52px] rounded-full bg-gradient-to-br from-[#f8b780] to-[#e97414] text-center text-[16px] leading-[52px] text-white">97%</div>
      </div>
      <AutoWindow />
    </div>
  );
}
